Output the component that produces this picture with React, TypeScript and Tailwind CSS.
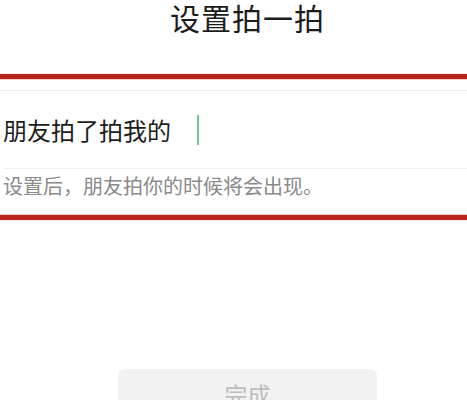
export default function App() {
	return (
		<div className="h-[400px] w-[467px] overflow-hidden bg-white font-['Noto_Sans_CJK_SC','Noto_Sans',sans-serif]">
			<h1 className="h-[34px] pl-[28px] text-center text-[30px] leading-[34px] tracking-[1px] text-[#1c1c1c]">
				设置拍一拍
			</h1>

			<div className="mt-[39px] h-px bg-[#f9e6e4]" />
			<div className="h-[5px] bg-[#b8261a]" />
			<div className="h-px bg-[#efcfcb]" />

			<div className="h-[10px]" />
			<div className="h-px bg-[#e9eff1]" />

			<div className="flex h-[77px] items-center pl-[3px]">
				<span className="text-[24px] leading-[30px] text-[#1c1c1c]">
					朋友拍了拍我的
				</span>
				<span className="ml-[26px] h-[30px] w-[2px] bg-[#6fc98a]" />
			</div>

			<div className="ml-[3px] h-px bg-[#f0f0f0]" />

			<div className="h-[45px] pl-[3px] pt-[5px]">
				<p className="text-[20px] leading-[24px] text-[#8a8a8a]">
					设置后，朋友拍你的时候将会出现。
				</p>
			</div>

			<div className="h-px bg-[#efcfcb]" />
			<div className="h-[5px] bg-[#b8261a]" />
			<div className="h-px bg-[#f9e6e4]" />

			<button className="ml-[118px] mt-[148px] flex h-[50px] w-[259px] items-center justify-center rounded-[7px] bg-[#f2f2f2] text-[23px] text-[#bdbdbd]">
				完成
			</button>
		</div>
	);
}
